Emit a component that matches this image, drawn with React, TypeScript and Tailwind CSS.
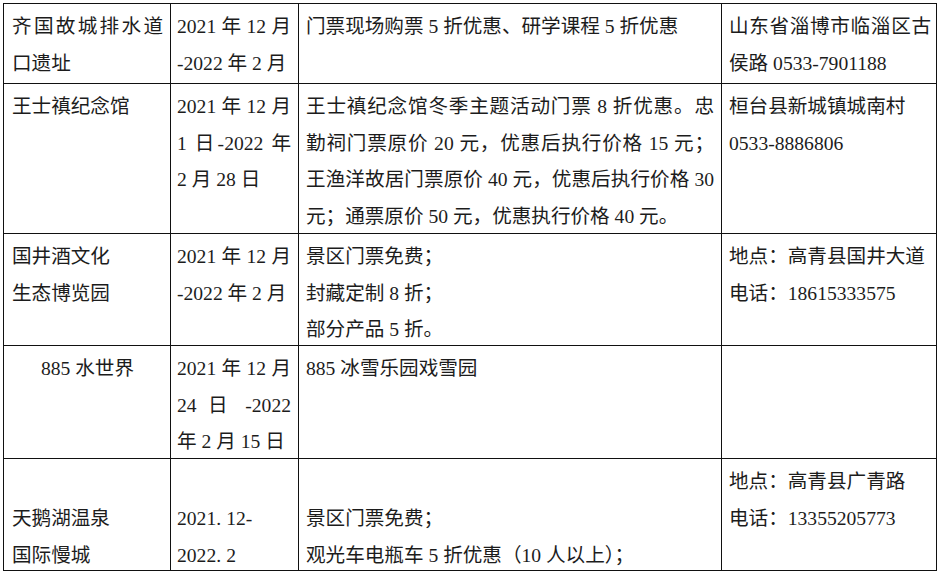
import type { ReactNode } from "react";

type Line = { text: ReactNode; justify?: boolean };

interface CellProps {
  lines: Line[];
  pad: string;
  className?: string;
}

function Cell({ lines, pad, className = "pt-[5px]" }: CellProps) {
  return (
    <div className={`overflow-hidden border-r border-b border-[#111] ${pad} ${className}`}>
      {lines.map((line, i) => (
        <div
          key={i}
          className={line.justify ? "text-justify [text-align-last:justify]" : ""}
        >
          {line.text}
        </div>
      ))}
    </div>
  );
}

const c1 = "pl-[8px] pr-[7px]";
const c2 = "pl-[6px] pr-[7px]";
const c3 = "pl-[7px] pr-[7px]";
const c4 = "pl-[7px] pr-[5px]";

// half-width dot drawn wider, as in the original document font
const Dot = () => <span className="inline-block w-[10px]">.</span>;

export default function App() {
  return (
    <div className="w-[942px] h-[576px] overflow-hidden bg-white pt-[3px] pl-[3px]">
      <div
        className="grid w-[934px] grid-cols-[167px_128px_423px_215px] grid-rows-[80px_150px_112px_113px_112px] border-l border-t border-[#111] text-[19.6px] leading-[36.7px] text-[#1c1c1c]"
        style={{ fontFamily: '"Liberation Serif", "Noto Sans CJK SC", serif' }}
      >
        {/* 齐国故城 */}
        <Cell pad={c1} lines={[{ text: "齐国故城排水道", justify: true }, { text: "口遗址" }]} />
        <Cell pad={c2} lines={[{ text: "2021 年 12 月", justify: true }, { text: "-2022 年 2 月" }]} />
        <Cell pad={c3} lines={[{ text: "门票现场购票 5 折优惠、研学课程 5 折优惠" }]} />
        <Cell
          pad={c4}
          lines={[{ text: "山东省淄博市临淄区古", justify: true }, { text: "侯路 0533-7901188" }]}
        />

        {/* 王士禛纪念馆 */}
        <Cell pad={c1} lines={[{ text: "王士禛纪念馆" }]} />
        <Cell
          pad={c2}
          lines={[
            { text: "2021 年 12 月", justify: true },
            { text: "1 日-2022 年", justify: true },
            { text: "2 月 28 日" },
          ]}
        />
        <Cell
          pad={c3}
          lines={[
            { text: "王士禛纪念馆冬季主题活动门票 8 折优惠。忠", justify: true },
            { text: "勤祠门票原价 20 元，优惠后执行价格 15 元；", justify: true },
            { text: "王渔洋故居门票原价 40 元，优惠后执行价格 30", justify: true },
            { text: "元；通票原价 50 元，优惠执行价格 40 元。" },
          ]}
        />
        <Cell pad={c4} lines={[{ text: "桓台县新城镇城南村" }, { text: "0533-8886806" }]} />

        {/* 国井酒文化 */}
        <Cell pad={c1} lines={[{ text: "国井酒文化" }, { text: "生态博览园" }]} />
        <Cell pad={c2} lines={[{ text: "2021 年 12 月", justify: true }, { text: "-2022 年 2 月" }]} />
        <Cell
          pad={c3}
          lines={[{ text: "景区门票免费；" }, { text: "封藏定制 8 折；" }, { text: "部分产品 5 折。" }]}
        />
        <Cell pad={c4} lines={[{ text: "地点：高青县国井大道" }, { text: "电话：18615333575" }]} />

        {/* 885 水世界 */}
        <Cell pad={`${c1} text-center`} lines={[{ text: "885 水世界" }]} />
        <Cell
          pad={c2}
          lines={[
            { text: "2021 年 12 月", justify: true },
            { text: "24 日 -2022", justify: true },
            { text: "年 2 月 15 日" },
          ]}
        />
        <Cell pad={c3} lines={[{ text: "885 冰雪乐园戏雪园" }]} />
        <Cell pad={c4} lines={[]} />

        {/* 天鹅湖温泉 */}
        <Cell pad={c1} className="pt-[42px]" lines={[{ text: "天鹅湖温泉" }, { text: "国际慢城" }]} />
        <Cell
          pad={c2}
          className="pt-[42px]"
          lines={[
            {
              text: (
                <>
                  2021
                  <Dot />
                  12-
                </>
              ),
            },
            {
              text: (
                <>
                  2022
                  <Dot />2
                </>
              ),
            },
          ]}
        />
        <Cell
          pad={c3}
          className="pt-[42px]"
          lines={[{ text: "景区门票免费；" }, { text: "观光车电瓶车 5 折优惠（10 人以上）；" }]}
        />
        <Cell pad={c4} lines={[{ text: "地点：高青县广青路" }, { text: "电话：13355205773" }]} />
      </div>
    </div>
  );
}
